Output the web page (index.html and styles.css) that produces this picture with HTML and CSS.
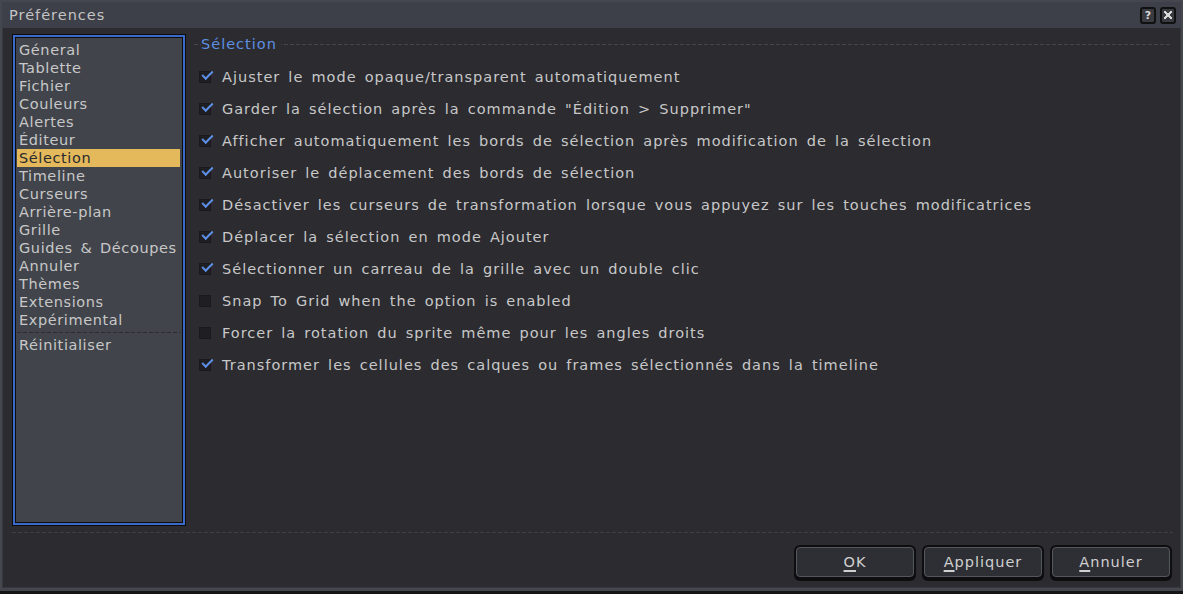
FILE: index.html
```html
<!DOCTYPE html>
<html lang="fr">
<head>
  <meta charset="UTF-8" />
  <meta name="viewport" content="width=device-width, initial-scale=1.0" />
  <title>Préférences</title>
  <link rel="stylesheet" href="styles.css">
</head>
<body>
  <div class="window">
    <!-- Barre de titre -->
    <div class="titlebar">
      <span class="title">Préférences</span>
      <div class="title-buttons">
        <span class="tbtn">?</span>
        <span class="tbtn">
          <svg width="10" height="10" viewBox="0 0 10 10" shape-rendering="crispEdges">
            <path d="M1 1h2v1h1v1h2v-1h1v-1h2v2h-1v1h-1v2h1v1h1v2h-2v-1h-1v-1h-2v1h-1v1h-2v-2h1v-1h1v-2h-1v-1h-1z" fill="#d8d8d8"/>
          </svg>
        </span>
      </div>
    </div>

    <div class="content">
      <div class="main">
        <!-- Liste des sections -->
        <ul class="section-list">
          <li>Géneral</li>
          <li>Tablette</li>
          <li>Fichier</li>
          <li>Couleurs</li>
          <li>Alertes</li>
          <li>Éditeur</li>
          <li class="active">Sélection</li>
          <li>Timeline</li>
          <li>Curseurs</li>
          <li>Arrière-plan</li>
          <li>Grille</li>
          <li>Guides &amp; Découpes</li>
          <li>Annuler</li>
          <li>Thèmes</li>
          <li>Extensions</li>
          <li>Expérimental</li>
          <li class="sep"></li>
          <li>Réinitialiser</li>
        </ul>

        <!-- Options de la section -->
        <div class="panel">
          <div class="heading"><span>Sélection</span></div>
          <label class="opt"><span class="check on"></span>Ajuster le mode opaque/transparent automatiquement</label>
          <label class="opt"><span class="check on"></span>Garder la sélection après la commande "Édition &gt; Supprimer"</label>
          <label class="opt"><span class="check on"></span>Afficher automatiquement les bords de sélection après modification de la sélection</label>
          <label class="opt"><span class="check on"></span>Autoriser le déplacement des bords de sélection</label>
          <label class="opt"><span class="check on"></span>Désactiver les curseurs de transformation lorsque vous appuyez sur les touches modificatrices</label>
          <label class="opt"><span class="check on"></span>Déplacer la sélection en mode Ajouter</label>
          <label class="opt"><span class="check on"></span>Sélectionner un carreau de la grille avec un double clic</label>
          <label class="opt"><span class="check"></span>Snap To Grid when the option is enabled</label>
          <label class="opt"><span class="check"></span>Forcer la rotation du sprite même pour les angles droits</label>
          <label class="opt"><span class="check on"></span>Transformer les cellules des calques ou frames sélectionnés dans la timeline</label>
        </div>
      </div>

      <div class="footer">
        <button class="btn"><u>O</u>K</button>
        <button class="btn"><u>A</u>ppliquer</button>
        <button class="btn"><u>A</u>nnuler</button>
      </div>
    </div>
  </div>
</body>
</html>
```

FILE: styles.css
```css
html, body {
  margin: 0;
  padding: 0;
  background: #000;
}

body {
  font-family: "DejaVu Sans", sans-serif;
  font-size: 14.5px;
  letter-spacing: 1px;
  word-spacing: 2.5px;
  color: #c8c8c8;
}

.window {
  width: 1183px;
  height: 594px;
  box-sizing: border-box;
  display: flex;
  flex-direction: column;
  background: #2b2b30;
  border: 2px solid #45474e;
  border-bottom: 6px solid #45474e;
  box-shadow: inset 0 0 0 1px #36383e;
  position: relative;
}

.window::after {
  content: "";
  position: absolute;
  left: -2px;
  right: -2px;
  bottom: -6px;
  height: 3px;
  background: #151517;
}

/* TITLE BAR */
.titlebar {
  height: 26px;
  background: #3d4048;
  display: flex;
  align-items: center;
  justify-content: space-between;
  padding: 0 5px 0 7px;
}

.title {
  color: #c4c4c4;
}

.title-buttons {
  display: flex;
  gap: 4px;
}

.tbtn {
  width: 16px;
  height: 17px;
  box-sizing: border-box;
  background: #3a3b41;
  border: 2px solid #111;
  border-radius: 3px;
  display: flex;
  align-items: center;
  justify-content: center;
  font-size: 11px;
  font-weight: bold;
  color: #d8d8d8;
  letter-spacing: 0;
}

/* CONTENT */
.content {
  flex: 1;
  display: flex;
  flex-direction: column;
  padding: 7px 8px 0 11px;
}

.main {
  flex: 1;
  display: flex;
  gap: 13px;
}

.section-list {
  list-style: none;
  margin: 0;
  width: 164px;
  height: 482px;
  padding: 4px 2px 0 2px;
  box-sizing: content-box;
  background: #41444b;
  border: 2px solid #3b6bc8;
  box-shadow: 0 0 0 1px #0c0c0e, inset 0 0 0 1px #0c0c0e;
  letter-spacing: 0.6px;
}

.section-list li {
  height: 18px;
  line-height: 18px;
  padding-left: 2px;
  white-space: nowrap;
  margin-right: 1px;
}

.section-list li.active {
  background: #e3b95b;
  color: #2a2a2e;
}

.section-list li.sep {
  height: 7px;
  background: repeating-linear-gradient(90deg, #2b2b30 0 4px, transparent 4px 6px) 0 3px / 100% 1px no-repeat;
}

/* PANEL */
.panel {
  flex: 1;
  padding-right: 2px;
}

.heading {
  height: 18px;
  display: flex;
  align-items: center;
  margin-left: -4px;
  margin-bottom: 8px;
  background: repeating-linear-gradient(90deg, #45474e 0 4px, transparent 4px 6px) 0 9px / 100% 1px no-repeat;
}

.heading span {
  margin-left: 7px;
  padding: 0 4px 0 0;
  background: #2b2b30;
  color: #5e90e0;
}

.opt {
  display: flex;
  align-items: center;
  height: 32px;
  white-space: nowrap;
}

.check {
  width: 12px;
  height: 12px;
  box-sizing: border-box;
  background: #1f1f23;
  border: 1px solid #1a1a1d;
  margin: 0 11px 0 1px;
  flex: none;
  position: relative;
}

.check.on::after {
  content: "";
  position: absolute;
  left: 2px;
  top: -1px;
  width: 9px;
  height: 4px;
  border-left: 2px solid #5d8fe6;
  border-bottom: 2px solid #5d8fe6;
  transform: rotate(-45deg);
  transform-origin: 50% 50%;
}

/* FOOTER */
.footer {
  height: 56px;
  display: flex;
  justify-content: flex-end;
  align-items: center;
  gap: 10px;
  padding: 0 3px 0 0;
  margin-left: -1px;
  background: repeating-linear-gradient(90deg, #3e4047 0 4px, transparent 4px 6px) 0 0 / 100% 1px no-repeat;
}

.btn {
  width: 118px;
  height: 30px;
  margin-top: 3px;
  font: inherit;
  letter-spacing: inherit;
  color: #d0d0d0;
  background: #2e2f35;
  border: 1px solid #55575e;
  border-radius: 4px;
  box-shadow: 0 0 0 2px #0e0e10, 0 2px 0 2px #0e0e10;
  cursor: pointer;
}

.btn u {
  text-underline-offset: 3px;
  text-decoration-thickness: 2px;
}
```
